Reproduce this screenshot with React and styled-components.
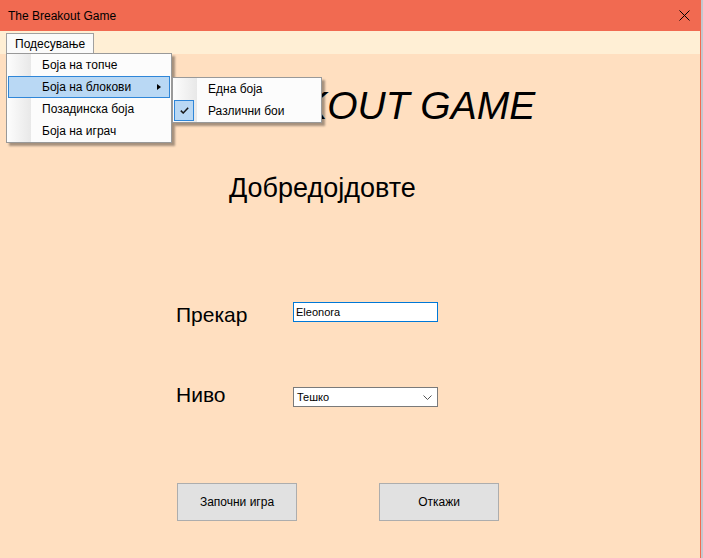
import React from 'react';
import styled, { createGlobalStyle } from 'styled-components';

const GlobalStyle = createGlobalStyle`
  html, body {
    margin: 0;
    padding: 0;
    background: #c3c7cd;
  }
  body {
    font-family: 'Liberation Sans', Arial, sans-serif;
    color: #000;
  }
  * {
    box-sizing: border-box;
  }
`;

const Window = styled.div`
  position: relative;
  width: 701px;
  height: 558px;
  display: flex;
  flex-direction: column;
  background: #ffdfc0;
  border-right: 1px solid #f16a51;
  overflow: hidden;
`;

const TitleBar = styled.div`
  height: 31px;
  flex-shrink: 0;
  display: flex;
  align-items: center;
  justify-content: space-between;
  padding: 0 10px 0 8px;
  background: #f16a51;
  font-size: 12px;
`;

const MenuStrip = styled.div`
  height: 23px;
  flex-shrink: 0;
  display: flex;
  align-items: flex-end;
  padding-left: 6px;
  background: #ffefd5;
`;

const MenuTitle = styled.div`
  height: 21px;
  padding: 0 8px;
  display: flex;
  align-items: center;
  font-size: 12px;
  background: #fafafa;
  border: 1px solid #a0a0a0;
  border-bottom: none;
`;

const Body = styled.div`
  flex: 1;
  display: flex;
  flex-direction: column;
`;

const Heading = styled.h1`
  margin: 32px 0 0;
  padding-left: 195px;
  font-size: 39px;
  line-height: 39px;
  font-weight: normal;
  font-style: italic;
  white-space: nowrap;
`;

const Welcome = styled.h2`
  margin: 48px 0 0;
  padding-left: 229px;
  font-size: 27px;
  line-height: 30px;
  font-weight: normal;
`;

const Form = styled.div`
  margin-top: 99px;
  padding-left: 176px;
  display: grid;
  grid-template-columns: 117px 145px;
  row-gap: 62px;
  align-items: start;
`;

const FieldLabel = styled.label`
  font-size: 21px;
  line-height: 20px;
  margin-top: ${(p) => p.$offset}px;
`;

const TextBox = styled.input`
  width: 145px;
  height: 20px;
  margin: 0;
  padding: 0 2px;
  border: 1px solid #0078d7;
  background: #fff;
  font-family: 'Liberation Sans', Arial, sans-serif;
  font-size: 11px;
  color: #000;
  outline: none;
`;

const Select = styled.div`
  width: 145px;
  height: 20px;
  display: flex;
  align-items: center;
  justify-content: space-between;
  padding: 0 5px 0 3px;
  border: 1px solid #7a7a7a;
  background: #fff;
  font-size: 11px;
`;

const Buttons = styled.div`
  margin-top: 76px;
  padding-left: 177px;
  display: flex;
  gap: 82px;
`;

const Button = styled.button`
  width: 120px;
  height: 38px;
  margin: 0;
  padding: 0;
  border: 1px solid #adadad;
  background: #e1e1e1;
  font-family: 'Liberation Sans', Arial, sans-serif;
  font-size: 12px;
  color: #000;
`;

const Dropdown = styled.div`
  position: absolute;
  left: ${(p) => p.$left}px;
  top: ${(p) => p.$top}px;
  width: ${(p) => p.$width}px;
  padding: 0 1px;
  border: 1px solid #999;
  background: linear-gradient(to right, #fdfdfd 0, #e8e8e8 24px, #fcfcfc 24px);
  box-shadow: 3px 3px 2px rgba(0, 0, 0, 0.35);
`;

const Item = styled.div`
  position: relative;
  height: 22px;
  display: flex;
  align-items: center;
  padding-left: 34px;
  font-size: 12px;
  white-space: nowrap;
  background: ${(p) => (p.$active ? '#b9d8f4' : 'transparent')};
  outline: ${(p) => (p.$active ? '1px solid #2f86d8' : 'none')};
  outline-offset: -1px;
`;

const Arrow = styled.span`
  position: absolute;
  right: 9px;
  top: 8px;
  width: 0;
  height: 0;
  border-top: 3.5px solid transparent;
  border-bottom: 3.5px solid transparent;
  border-left: 4px solid #000;
`;

const CheckBox = styled.span`
  position: absolute;
  left: 0;
  top: 0;
  width: 20px;
  height: 21px;
  display: flex;
  align-items: center;
  justify-content: center;
  background: #b9d8f4;
  border: 1px solid #2f86d8;
`;

const CloseIcon = () => (
  <svg width="11" height="11" viewBox="0 0 11 11">
    <path d="M0.5 0.5 L10.5 10.5 M10.5 0.5 L0.5 10.5" stroke="#000" strokeWidth="1" fill="none" />
  </svg>
);

const Chevron = () => (
  <svg width="9" height="5" viewBox="0 0 9 5">
    <path d="M0.5 0.5 L4.5 4.5 L8.5 0.5" stroke="#555" strokeWidth="1" fill="none" />
  </svg>
);

const Check = () => (
  <svg width="9" height="7" viewBox="0 0 9 7">
    <path d="M0.8 3.6 L3.2 6 L8.2 0.8" stroke="#1a1a1a" strokeWidth="1.5" fill="none" />
  </svg>
);

const settings = [
  { label: 'Боја на топче' },
  { label: 'Боја на блокови', active: true, sub: true },
  { label: 'Позадинска боја' },
  { label: 'Боја на играч' },
];

export default function App() {
  return (
    <>
      <GlobalStyle />
      <Window>
        <TitleBar>
          <span>The Breakout Game</span>
          <CloseIcon />
        </TitleBar>
        <MenuStrip>
          <MenuTitle>Подесување</MenuTitle>
        </MenuStrip>
        <Body>
          <Heading>BREAKOUT GAME</Heading>
          <Welcome>Добредојдовте</Welcome>
          <Form>
            <FieldLabel $offset={3}>Прекар</FieldLabel>
            <TextBox value="Eleonora" readOnly />
            <FieldLabel $offset={-2}>Ниво</FieldLabel>
            <Select>
              <span>Тешко</span>
              <Chevron />
            </Select>
          </Form>
          <Buttons>
            <Button>Започни игра</Button>
            <Button>Откажи</Button>
          </Buttons>
        </Body>

        <Dropdown $left={6} $top={53} $width={166}>
          {settings.map((s) => (
            <Item key={s.label} $active={s.active}>
              {s.label}
              {s.sub && <Arrow />}
            </Item>
          ))}
        </Dropdown>
        <Dropdown $left={172} $top={77} $width={150}>
          <Item>Една боја</Item>
          <Item>
            <CheckBox>
              <Check />
            </CheckBox>
            Различни бои
          </Item>
        </Dropdown>
      </Window>
    </>
  );
}
